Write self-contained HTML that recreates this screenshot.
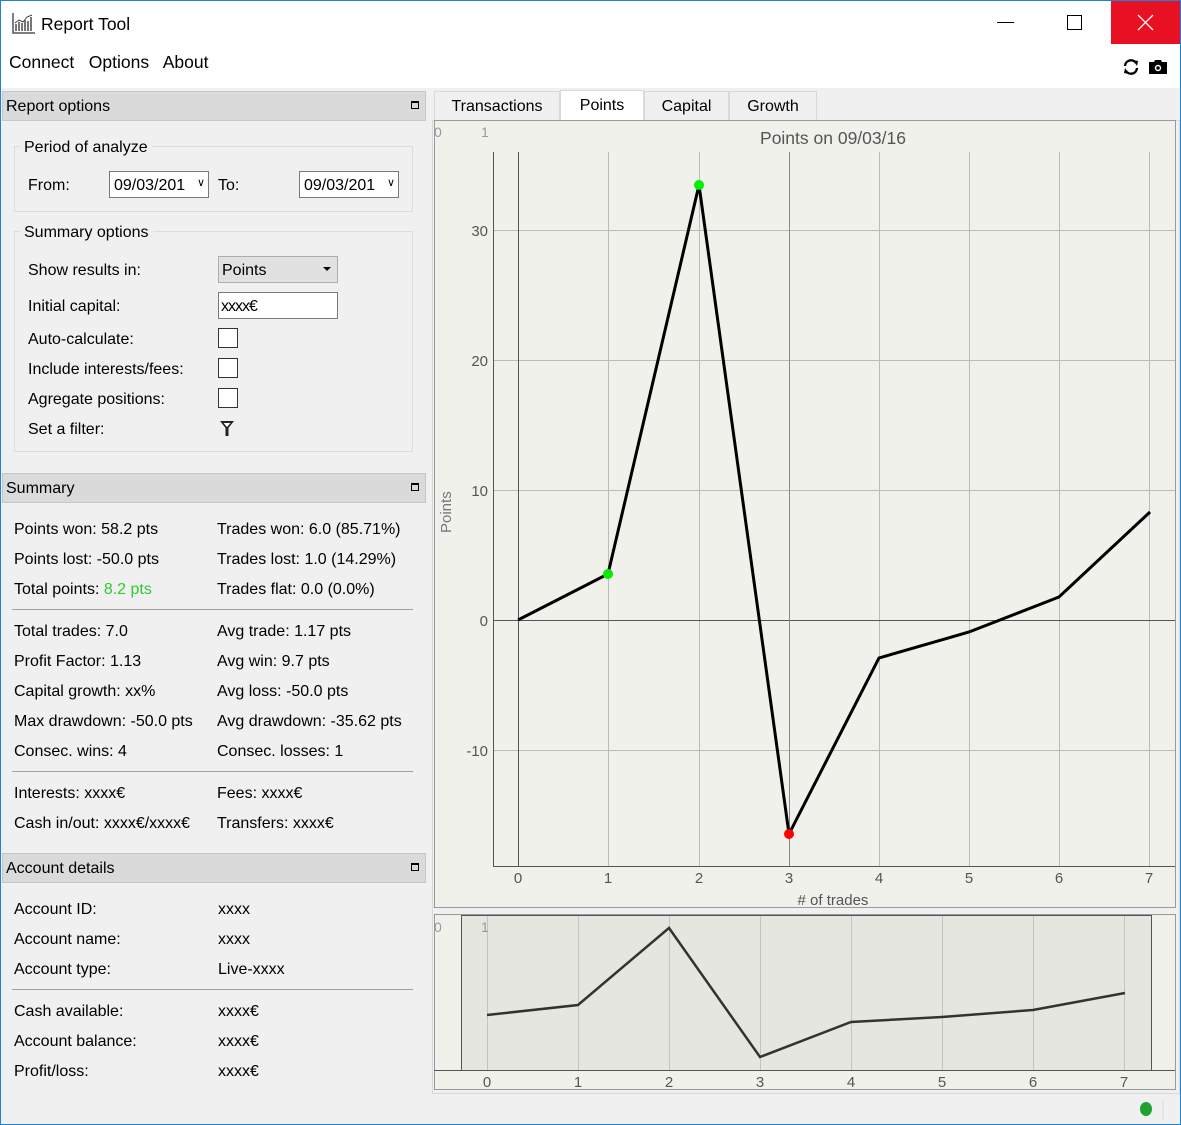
<!DOCTYPE html>
<html><head><meta charset="utf-8"><style>
*{box-sizing:border-box;margin:0;padding:0}
body{width:1181px;height:1125px;position:relative;background:#f0f0f0;font-family:"Liberation Sans",sans-serif;font-size:16px;color:#000;overflow:hidden}
.a{position:absolute;white-space:nowrap}
.hdr{position:absolute;left:2px;width:424px;height:30px;background:#dadada;border:1px solid #c6c6c6}
.hdr span{position:absolute;left:3px;top:6px}
.hdr i{position:absolute;right:6px;top:9px;width:8px;height:8px;border:1px solid #000;border-top-width:2px}
.grp{position:absolute;border:1px solid #dcdcdc}
.cb{position:absolute;width:20px;height:20px;border:1px solid #333;background:#fff}
.sep{position:absolute;left:12px;width:401px;height:1px;background:#a0a0a0}
.tab{position:absolute;top:91px;height:30px;background:#f0f0f0;border:1px solid #d9d9d9;padding-top:6px;text-align:center}
</style></head><body>
<div class="a" style="left:0;top:0;width:1181px;height:88px;background:#fff"></div>
<div class="a" style="left:0;top:0;width:1px;height:1125px;background:#1883d7"></div>
<div class="a" style="right:0;top:0;width:1px;height:1125px;background:#1883d7"></div>
<div class="a" style="left:0;top:0;width:1181px;height:1px;background:#1883d7"></div>
<div class="a" style="left:0;bottom:0;width:1181px;height:1px;background:#1883d7"></div>
<svg class="a" style="left:12px;top:12px" width="24" height="22" viewBox="0 0 24 22"><path d="M1 1V21H23" stroke="#555" fill="none" stroke-width="1.5"/><path d="M4 19V12M7 19V10M10 19V11M13 19V8M16 19V9M19 19V5" stroke="#777" stroke-width="2"/><path d="M3 11L7 8L11 10L15 5L20 3" stroke="#444" fill="none"/></svg>
<div class="a" style="left:41px;top:14px;font-size:17.5px">Report Tool</div>
<div class="a" style="left:997px;top:22px;width:17px;height:1px;background:#000"></div>
<div class="a" style="left:1067px;top:15px;width:15px;height:15px;border:1px solid #000"></div>
<div class="a" style="left:1111px;top:1px;width:69px;height:43px;background:#e81123"></div>
<svg class="a" style="left:1137px;top:14px" width="17" height="17"><path d="M1 1L16 16M16 1L1 16" stroke="#fff" stroke-width="1.3"/></svg>
<div class="a" style="left:9px;top:52px;font-size:17.5px">Connect&nbsp;&nbsp; Options&nbsp;&nbsp; About</div>
<svg class="a" style="left:1122px;top:58px" width="18" height="18" viewBox="0 0 18 18"><path d="M3 8A6 6 0 0 1 14 5" stroke="#000" stroke-width="2.4" fill="none"/><path d="M11 2L16 3L15 8Z" fill="#000"/><path d="M15 10A6 6 0 0 1 4 13" stroke="#000" stroke-width="2.4" fill="none"/><path d="M7 16L2 15L3 10Z" fill="#000"/></svg>
<svg class="a" style="left:1149px;top:59px" width="18" height="16" viewBox="0 0 18 16"><path d="M0 3H5L6 1H12L13 3H18V15H0Z" fill="#000"/><circle cx="9" cy="9" r="3.2" fill="#fff"/><circle cx="9" cy="9" r="1.8" fill="#000"/></svg>

<div class="hdr" style="top:91px"><span>Report options</span><i></i></div>
<div class="grp" style="left:14px;top:146px;width:399px;height:66px"></div>
<div class="a" style="left:20px;top:139px;background:#f0f0f0;padding:0 4px">Period of analyze</div>
<div class="a" style="left:28px;top:177px">From:</div>
<div class="a" style="left:109px;top:171px;width:100px;height:27px;border:1px solid #7a7a7a;background:#fff;padding:5px 0 0 4px">09/03/201<span style="position:absolute;right:3px;top:4px;font-size:11px">&#8744;</span></div>
<div class="a" style="left:218px;top:177px">To:</div>
<div class="a" style="left:299px;top:171px;width:100px;height:27px;border:1px solid #7a7a7a;background:#fff;padding:5px 0 0 4px">09/03/201<span style="position:absolute;right:3px;top:4px;font-size:11px">&#8744;</span></div>
<div class="grp" style="left:14px;top:231px;width:399px;height:221px"></div>
<div class="a" style="left:20px;top:224px;background:#f0f0f0;padding:0 4px">Summary options</div>
<div class="a" style="left:28px;top:262px">Show results in:</div>
<div class="a" style="left:218px;top:256px;width:120px;height:27px;border:1px solid #adadad;background:#e1e1e1;padding:5px 0 0 3px">Points<span style="position:absolute;right:6px;top:10px;border:4px solid transparent;border-top:4px solid #000"></span></div>
<div class="a" style="left:28px;top:298px">Initial capital:</div>
<div class="a" style="left:218px;top:292px;width:120px;height:27px;border:1px solid #7a7a7a;background:#fff;padding:5px 0 0 2px;letter-spacing:-1px">xxxx€</div>
<div class="a" style="left:28px;top:331px">Auto-calculate:</div><div class="cb" style="left:218px;top:328px"></div>
<div class="a" style="left:28px;top:361px">Include interests/fees:</div><div class="cb" style="left:218px;top:358px"></div>
<div class="a" style="left:28px;top:391px">Agregate positions:</div><div class="cb" style="left:218px;top:388px"></div>
<div class="a" style="left:28px;top:421px">Set a filter:</div>
<svg class="a" style="left:219px;top:420px" width="16" height="17"><path d="M1 1H15L9.5 8V16H6.5V8Z" fill="#222"/><path d="M4.5 3H11.5L8 7Z" fill="#fff"/></svg>

<div class="hdr" style="top:473px"><span>Summary</span><i></i></div>
<div class="a" style="left:14px;top:521px">Points won: 58.2 pts</div><div class="a" style="left:217px;top:521px">Trades won: 6.0 (85.71%)</div>
<div class="a" style="left:14px;top:551px">Points lost: -50.0 pts</div><div class="a" style="left:217px;top:551px">Trades lost: 1.0 (14.29%)</div>
<div class="a" style="left:14px;top:581px">Total points: <span style="color:#2ecc2e">8.2 pts</span></div><div class="a" style="left:217px;top:581px">Trades flat: 0.0 (0.0%)</div>
<div class="sep" style="top:609px"></div>
<div class="a" style="left:14px;top:623px">Total trades: 7.0</div><div class="a" style="left:217px;top:623px">Avg trade: 1.17 pts</div>
<div class="a" style="left:14px;top:653px">Profit Factor: 1.13</div><div class="a" style="left:217px;top:653px">Avg win: 9.7 pts</div>
<div class="a" style="left:14px;top:683px">Capital growth: xx%</div><div class="a" style="left:217px;top:683px">Avg loss: -50.0 pts</div>
<div class="a" style="left:14px;top:713px">Max drawdown: -50.0 pts</div><div class="a" style="left:217px;top:713px">Avg drawdown: -35.62 pts</div>
<div class="a" style="left:14px;top:743px">Consec. wins: 4</div><div class="a" style="left:217px;top:743px">Consec. losses: 1</div>
<div class="sep" style="top:771px"></div>
<div class="a" style="left:14px;top:785px">Interests: xxxx€</div><div class="a" style="left:217px;top:785px">Fees: xxxx€</div>
<div class="a" style="left:14px;top:815px">Cash in/out: xxxx€/xxxx€</div><div class="a" style="left:217px;top:815px">Transfers: xxxx€</div>

<div class="hdr" style="top:853px"><span>Account details</span><i></i></div>
<div class="a" style="left:14px;top:901px">Account ID:</div><div class="a" style="left:218px;top:901px">xxxx</div>
<div class="a" style="left:14px;top:931px">Account name:</div><div class="a" style="left:218px;top:931px">xxxx</div>
<div class="a" style="left:14px;top:961px">Account type:</div><div class="a" style="left:218px;top:961px">Live-xxxx</div>
<div class="sep" style="top:989px"></div>
<div class="a" style="left:14px;top:1003px">Cash available:</div><div class="a" style="left:218px;top:1003px">xxxx€</div>
<div class="a" style="left:14px;top:1033px">Account balance:</div><div class="a" style="left:218px;top:1033px">xxxx€</div>
<div class="a" style="left:14px;top:1063px">Profit/loss:</div><div class="a" style="left:218px;top:1063px">xxxx€</div>

<div class="a" style="left:432px;top:120px;width:748px;height:974px;border:1px solid #d9d9d9;background:#f0f0f0"></div>
<div class="tab" style="left:434px;width:126px">Transactions</div>
<div class="tab" style="left:560px;top:90px;height:32px;width:84px;background:#fff">Points</div>
<div class="tab" style="left:644px;width:85px">Capital</div>
<div class="tab" style="left:729px;width:88px">Growth</div>

<svg class="a" style="left:0;top:0" width="1181" height="1125" font-family="Liberation Sans,sans-serif">
<rect x="434.5" y="120.5" width="741" height="787" fill="#f1f1ec" stroke="#999"/>
<text x="434" y="137" font-size="14" fill="#999">0</text><text x="481" y="137" font-size="14" fill="#999">1</text>
<text x="833" y="144" font-size="17.5" fill="#555" text-anchor="middle">Points on 09/03/16</text>
<g stroke="#bbb"><path d="M608.5 152V866M699.5 152V866M879.5 152V866M969.5 152V866M1059.5 152V866M1149.5 152V866"/><path d="M493 230.5H1175M493 360.5H1175M493 490.5H1175M493 750.5H1175"/></g>
<g stroke="#555"><path d="M518.5 152V866M493.5 152V866M493 866.5H1175M493 620.5H1175"/></g>
<path d="M789.5 152V866" stroke="#888"/>
<g font-size="15" fill="#555" text-anchor="end"><text x="488" y="236">30</text><text x="488" y="366">20</text><text x="488" y="496">10</text><text x="488" y="626">0</text><text x="488" y="756">-10</text></g>
<text transform="translate(451,533) rotate(-90)" font-size="15" fill="#777">Points</text>
<g font-size="15" fill="#555" text-anchor="middle"><text x="518" y="883">0</text><text x="608" y="883">1</text><text x="699" y="883">2</text><text x="789" y="883">3</text><text x="879" y="883">4</text><text x="969" y="883">5</text><text x="1059" y="883">6</text><text x="1149" y="883">7</text><text x="833" y="905">#&#160;of trades</text></g>
<polyline points="518,620 608,574 699,185 789,834 879,658 969,632 1059,597 1150,512" fill="none" stroke="#000" stroke-width="3"/>
<circle cx="608" cy="574" r="5" fill="#0e0"/><circle cx="699" cy="185" r="5" fill="#0e0"/><circle cx="789" cy="834" r="5" fill="#f00"/>

<rect x="434.5" y="914.5" width="741" height="175" fill="#f1f1ec" stroke="#999"/>
<rect x="461.5" y="915.5" width="690" height="155" fill="#e6e6e1" stroke="#555"/>
<path d="M434 1070.5H1175" stroke="#555"/>
<g stroke="#c4c4c0"><path d="M578.5 916V1070M669.5 916V1070M760.5 916V1070M851.5 916V1070M942.5 916V1070M1033.5 916V1070M1124.5 916V1070M487.5 916V1070"/></g>
<text x="434" y="932" font-size="14" fill="#999">0</text><text x="481" y="932" font-size="14" fill="#999">1</text>
<polyline points="487,1015 578,1005 669,928 760,1057 851,1022 942,1017 1033,1010 1125,993" fill="none" stroke="#333" stroke-width="2.5"/>
<g font-size="15" fill="#555" text-anchor="middle"><text x="487" y="1087">0</text><text x="578" y="1087">1</text><text x="669" y="1087">2</text><text x="760" y="1087">3</text><text x="851" y="1087">4</text><text x="942" y="1087">5</text><text x="1033" y="1087">6</text><text x="1124" y="1087">7</text></g>
<ellipse cx="1146" cy="1109" rx="6" ry="7" fill="#1fa22e"/>
<path d="M1163 1100V1120" stroke="#ddd"/>
</svg>
</body></html>
